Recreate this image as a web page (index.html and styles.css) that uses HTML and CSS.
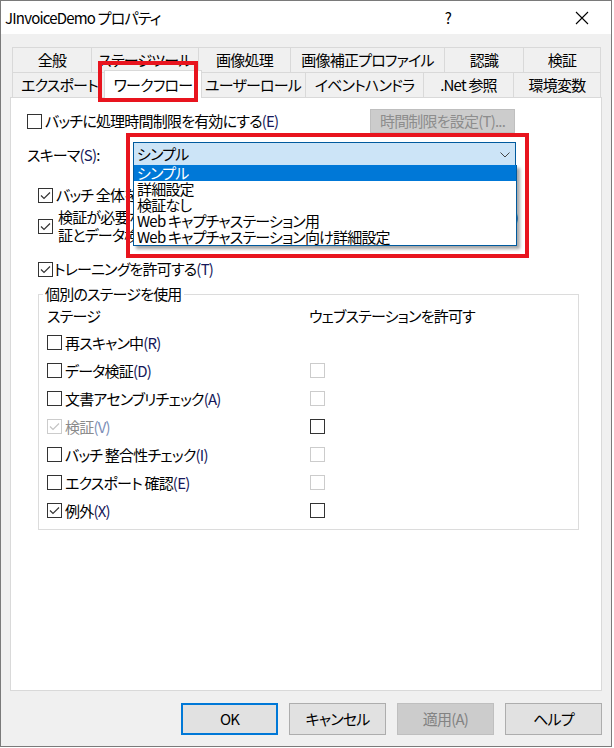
FILE: index.html
```html
<!DOCTYPE html>
<html lang="ja">
<head>
    <meta charset="UTF-8">
    <title>JInvoiceDemo プロパティ</title>
    <link rel="stylesheet" href="styles.css">
</head>
<body>
<div class="window">
    <div class="titlebar">
        <span class="title">JInvoiceDemo プロパティ</span>
        <span class="tb-help">?</span>
        <span class="tb-close">
            <svg width="14" height="14" viewBox="0 0 14 14"><path d="M1 1 L13 13 M13 1 L1 13" stroke="#000" stroke-width="1.1" fill="none"/></svg>
        </span>
    </div>

    <div class="dialog">
        <div class="tabs">
            <div class="tab-row row1">
                <div class="tab">全般</div>
                <div class="tab">ステージツール</div>
                <div class="tab">画像処理</div>
                <div class="tab">画像補正プロファイル</div>
                <div class="tab">認識</div>
                <div class="tab">検証</div>
            </div>
            <div class="tab-row row2">
                <div class="tab">エクスポート</div>
                <div class="tab active">ワークフロー</div>
                <div class="tab">ユーザーロール</div>
                <div class="tab">イベントハンドラ</div>
                <div class="tab">.Net 参照</div>
                <div class="tab">環境変数</div>
            </div>
        </div>

        <div class="panel">
            <div class="row row-limit">
                <span class="cb"></span>
                <span class="label">バッチに処理時間制限を有効にする<span class="mn">(E)</span></span>
                <span class="btn-limit">時間制限を設定(T)...</span>
            </div>

            <div class="row row-schema">
                <span class="schema-label">スキーマ<span class="mn">(S)</span>:</span>
                <div class="combo">
                    <span class="combo-text">シンプル</span>
                    <svg class="chevron" width="10" height="6" viewBox="0 0 10 6"><path d="M0.5 0.5 L5 5 L9.5 0.5" stroke="#444" fill="none"/></svg>
                    <ul class="dropdown">
                        <li class="selected">シンプル</li>
                        <li>詳細設定</li>
                        <li>検証なし</li>
                        <li>Web キャプチャステーション用</li>
                        <li>Web キャプチャステーション向け詳細設定</li>
                    </ul>
                </div>
            </div>

            <div class="row row-sub row-whole">
                <span class="cb checked"><svg width="13" height="13" viewBox="0 0 13 13"><path d="M2 6.5 L5 9.5 L11 3.5" stroke="#333" stroke-width="1.2" fill="none"/></svg></span>
                <span class="label">バッチ 全体を検証ステーションで処理する<span class="mn">(W)</span></span>
            </div>

            <div class="row row-sub row-verify">
                <span class="cb checked"><svg width="13" height="13" viewBox="0 0 13 13"><path d="M2 6.5 L5 9.5 L11 3.5" stroke="#333" stroke-width="1.2" fill="none"/></svg></span>
                <span class="label two-line">検証が必要なバッチでは検証ステーションの前にデータ検証を実行します<span class="mn">(O)</span><br>証とデータ検証を同時に行う</span>
            </div>

            <div class="row row-sub row-training">
                <span class="cb checked"><svg width="13" height="13" viewBox="0 0 13 13"><path d="M2 6.5 L5 9.5 L11 3.5" stroke="#333" stroke-width="1.2" fill="none"/></svg></span>
                <span class="label tight">トレーニングを許可する<span class="mn">(T)</span></span>
            </div>

            <fieldset class="stages">
                <legend>個別のステージを使用</legend>
                <div class="stage-grid">
                    <div class="head">ステージ</div>
                    <div class="head">ウェブステーションを許可す</div>

                    <div class="stage"><span class="cb"></span>再スキャン中<span class="mn">(R)</span></div>
                    <div class="web"></div>

                    <div class="stage"><span class="cb"></span>データ検証<span class="mn">(D)</span></div>
                    <div class="web"><span class="cb disabled"></span></div>

                    <div class="stage"><span class="cb"></span>文書アセンブリチェック<span class="mn">(A)</span></div>
                    <div class="web"><span class="cb disabled"></span></div>

                    <div class="stage is-disabled"><span class="cb disabled checked"><svg width="13" height="13" viewBox="0 0 13 13"><path d="M2 6.5 L5 9.5 L11 3.5" stroke="#c4c4c4" stroke-width="1.2" fill="none"/></svg></span>検証<span class="mn">(V)</span></div>
                    <div class="web"><span class="cb"></span></div>

                    <div class="stage"><span class="cb"></span>バッチ 整合性チェック<span class="mn">(I)</span></div>
                    <div class="web"><span class="cb disabled"></span></div>

                    <div class="stage"><span class="cb"></span>エクスポート 確認<span class="mn">(E)</span></div>
                    <div class="web"><span class="cb disabled"></span></div>

                    <div class="stage"><span class="cb checked"><svg width="13" height="13" viewBox="0 0 13 13"><path d="M2 6.5 L5 9.5 L11 3.5" stroke="#333" stroke-width="1.2" fill="none"/></svg></span>例外<span class="mn">(X)</span></div>
                    <div class="web"><span class="cb"></span></div>
                </div>
            </fieldset>
        </div>

        <div class="buttons">
            <span class="button default">OK</span>
            <span class="button">キャンセル</span>
            <span class="button disabled">適用(A)</span>
            <span class="button">ヘルプ</span>
        </div>
    </div>

    <!-- annotation boxes -->
    <div class="mark mark-tab"></div>
    <div class="mark mark-combo"></div>
</div>
</body>
</html>
```

FILE: styles.css
```css
* {
    box-sizing: border-box;
}
body {
    margin: 0;
    background: #fff;
    font-family: "Noto Sans CJK JP", "Noto Sans", sans-serif;
    font-size: 15px;
    font-feature-settings: "palt";
    letter-spacing: -0.8px;
    color: #000;
}
.window {
    position: relative;
    width: 612px;
    height: 747px;
    border: 1px solid #7a7a7a;
    background: #f0f0f0;
    display: flex;
    flex-direction: column;
}
.titlebar {
    height: 33px;
    background: #fff;
    display: flex;
    align-items: center;
    padding-left: 4px;
}
.title {
    flex: 1;
    line-height: 20px;
    padding-top: 1px;
}
.tb-help {
    width: 20px;
    text-align: center;
    margin-right: 117px;
    line-height: 20px;
}
.tb-close {
    width: 14px;
    height: 14px;
    margin-right: 22px;
    display: flex;
}
.dialog {
    flex: 1;
    padding: 13px 9px 0 9px;
    display: flex;
    flex-direction: column;
}

/* tabs */
.tabs {
    margin-left: 2px;
    width: 588px;
}
.tab-row {
    display: grid;
    height: 25px;
}
.row1 {
    grid-template-columns: 79px 107px 92px 154px 79px 77px;
}
.row2 {
    grid-template-columns: 94px 94px 105px 118px 90px 87px;
}
.tab {
    border: 1px solid #d9d9d9;
    border-bottom: none;
    margin-right: -1px;
    text-align: center;
    line-height: 23px;
    background: #f0f0f0;
    white-space: nowrap;
}
.tab.active {
    position: relative;
    z-index: 1;
    background: #fff;
    margin: -2px -2px -1px -2px;
    line-height: 27px;
}

/* page */
.panel {
    position: relative;
    width: 592px;
    height: 594px;
    background: #fff;
    border: 1px solid #d9d9d9;
    padding: 11px 0 0 16px;
}
.row {
    display: flex;
    align-items: center;
}
.cb {
    flex: none;
    width: 15px;
    height: 15px;
    border: 1px solid #333;
    background: #fff;
    display: flex;
    align-items: center;
    justify-content: center;
}
.cb.disabled {
    border-color: #cccccc;
}
.label {
    margin-left: 3px;
    line-height: 18px;
    white-space: nowrap;
}
.label.tight {
    margin-left: 1px;
}
.mn {
    color: #16185a;
}
.row-limit {
    height: 24px;
}
.btn-limit {
    margin-left: auto;
    margin-right: 86px;
    width: 145px;
    height: 24px;
    background: #cccccc;
    border: 1px solid #bfbfbf;
    color: #8d8d8d;
    text-align: center;
    line-height: 22px;
}
.row-schema {
    margin-top: 9px;
    height: 24px;
}
.schema-label {
    width: 106px;
}
.combo {
    position: relative;
    width: 383px;
    height: 24px;
    background: #cce4f7;
    border: 1px solid #005a9e;
    display: flex;
    align-items: center;
    padding-left: 3px;
}
.combo-text {
    flex: 1;
    line-height: 20px;
}
.chevron {
    margin-right: 5px;
    margin-top: 1px;
}
.dropdown {
    position: absolute;
    z-index: 2;
    top: 22px;
    left: -1px;
    width: 384px;
    margin: 0;
    padding: 0;
    list-style: none;
    background: #fff;
    border: 1px solid #005a9e;
    border-top: none;
    box-shadow: 3px 3px 3px rgba(0, 0, 0, 0.35);
}
.dropdown li {
    height: 16px;
    line-height: 16px;
    padding-left: 3px;
    white-space: nowrap;
}
.dropdown li.selected {
    background: #0078d7;
    color: #fff;
}
.row-sub {
    padding-left: 11px;
}
.row-whole {
    margin-top: 19px;
    height: 20px;
}
.row-verify {
    margin-top: 3px;
}
.row-verify .label {
    margin-left: 5px;
}
.row-training {
    margin-top: 15px;
    height: 20px;
}

/* group box */
.stages {
    margin: 5px 0 0 11px;
    width: 541px;
    padding: 0 0 5px 8px;
    border: 1px solid #dcdcdc;
}
.stages legend {
    margin-left: -4px;
    padding: 0 2px;
    line-height: 20px;
}
.stage-grid {
    display: grid;
    grid-template-columns: 262px 1fr;
    grid-template-rows: 24px;
    grid-auto-rows: 28px;
}
.head {
    height: 20px;
    line-height: 20px;
    margin-top: 2px;
}
.stage, .web {
    display: flex;
    align-items: center;
    white-space: nowrap;
}
.stage .cb {
    margin-right: 3px;
}
.web .cb {
    margin-left: 1px;
}
.stage.is-disabled {
    color: #8a8a8a;
}
.stage.is-disabled .mn {
    color: #7d8fb8;
}

/* bottom buttons */
.buttons {
    display: flex;
    justify-content: flex-end;
    gap: 11px;
    margin-top: 12px;
}
.button {
    width: 97px;
    height: 32px;
    background: #e1e1e1;
    border: 1px solid #adadad;
    text-align: center;
    line-height: 30px;
}
.button.default {
    border: 2px solid #0078d7;
    line-height: 28px;
}
.button.disabled {
    background: #cccccc;
    border-color: #bfbfbf;
    color: #838383;
}

/* red highlight boxes */
.mark {
    position: absolute;
    z-index: 5;
    border: 4px solid #e8141e;
}
.mark-tab {
    left: 97px;
    top: 60px;
    width: 100px;
    height: 41px;
}
.mark-combo {
    left: 125px;
    top: 132px;
    width: 403px;
    height: 125px;
}
```
